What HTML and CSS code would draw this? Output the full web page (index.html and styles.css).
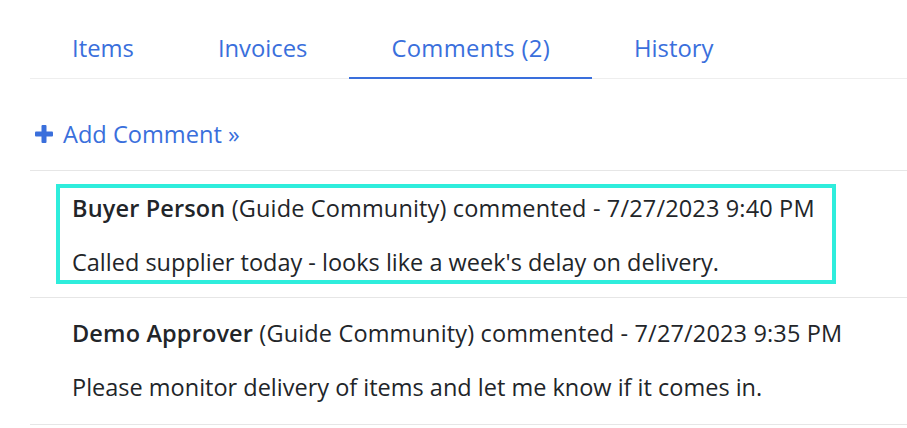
FILE: index.html
```html
<!DOCTYPE html>
<html lang="en">
<head>
<meta charset="utf-8">
<title>Comments</title>
<link rel="stylesheet" href="styles.css">
</head>
<body>
<div class="page">
  <nav class="tabs">
    <a class="tab" href="#">Items</a>
    <a class="tab" href="#">Invoices</a>
    <a class="tab active" href="#">Comments (2)</a>
    <a class="tab" href="#">History</a>
  </nav>
  <div class="add-row">
    <a class="add-link" href="#">
      <svg class="plus" width="18" height="18" viewBox="0 0 18 18" aria-hidden="true">
        <rect x="6.5" y="0" width="5" height="18" rx="1" fill="#3a6fdc"/>
        <rect x="0" y="6.5" width="18" height="5" rx="1" fill="#3a6fdc"/>
      </svg>
      <span>Add Comment »</span>
    </a>
  </div>
  <ul class="comments">
    <li class="comment">
      <div class="comment-box highlight">
        <p class="meta"><strong>Buyer Person</strong> (Guide Community) commented - 7/27/2023 9:40 PM</p>
        <p class="body">Called supplier today - looks like a week's delay on delivery.</p>
      </div>
    </li>
    <li class="comment">
      <div class="comment-box">
        <p class="meta"><strong>Demo Approver</strong> (Guide Community) commented - 7/27/2023 9:35 PM</p>
        <p class="body">Please monitor delivery of items and let me know if it comes in.</p>
      </div>
    </li>
  </ul>
</div>
</body>
</html>
```

FILE: styles.css
```css
* { box-sizing: border-box; }
html, body { margin: 0; padding: 0; background: #ffffff; }
body {
  font-family: "Open Sans", "Noto Sans", sans-serif;
  color: #222529;
  overflow: hidden;
}
.page {
  padding-left: 30px;
}
.tabs {
  display: flex;
  margin-top: 18px;
  border-bottom: 1px solid #eeeeee;
}
.tab {
  display: block;
  padding: 16px 42px 15px;
  line-height: 28px;
  font-size: 23.8px;
  color: #3a6fdc;
  text-decoration: none;
  border-bottom: 2px solid transparent;
  margin-bottom: -1px;
  white-space: nowrap;
}
.tab.active {
  border-bottom-color: #3a6fdc;
  letter-spacing: 0.3px;
}
.add-row {
  padding: 40px 0 21px;
  border-bottom: 1px solid #e6e6e6;
}
.add-link {
  display: flex;
  align-items: center;
  gap: 10px;
  padding-left: 5px;
  line-height: 30px;
  font-size: 23.6px;
  color: #3a6fdc;
  text-decoration: none;
}
.plus { flex: none; }
.comments {
  list-style: none;
  margin: 0;
  padding: 0;
}
.comment {
  padding: 13px 0 13px 26px;
  border-bottom: 1px solid #e6e6e6;
}
.comment + .comment {
  padding-top: 11px;
  padding-bottom: 15px;
}
.comment-box {
  width: 780px;
  padding: 6px 12px 4px;
  border: 4px solid transparent;
  white-space: nowrap;
}
.comment-box.highlight {
  border-color: #2eeddc;
}
.meta, .body {
  margin: 0;
  font-size: 23.5px;
  line-height: 28px;
}
.meta { letter-spacing: 0.15px; }
.meta strong { font-weight: 600; }
.body { margin-top: 26px; }
```
